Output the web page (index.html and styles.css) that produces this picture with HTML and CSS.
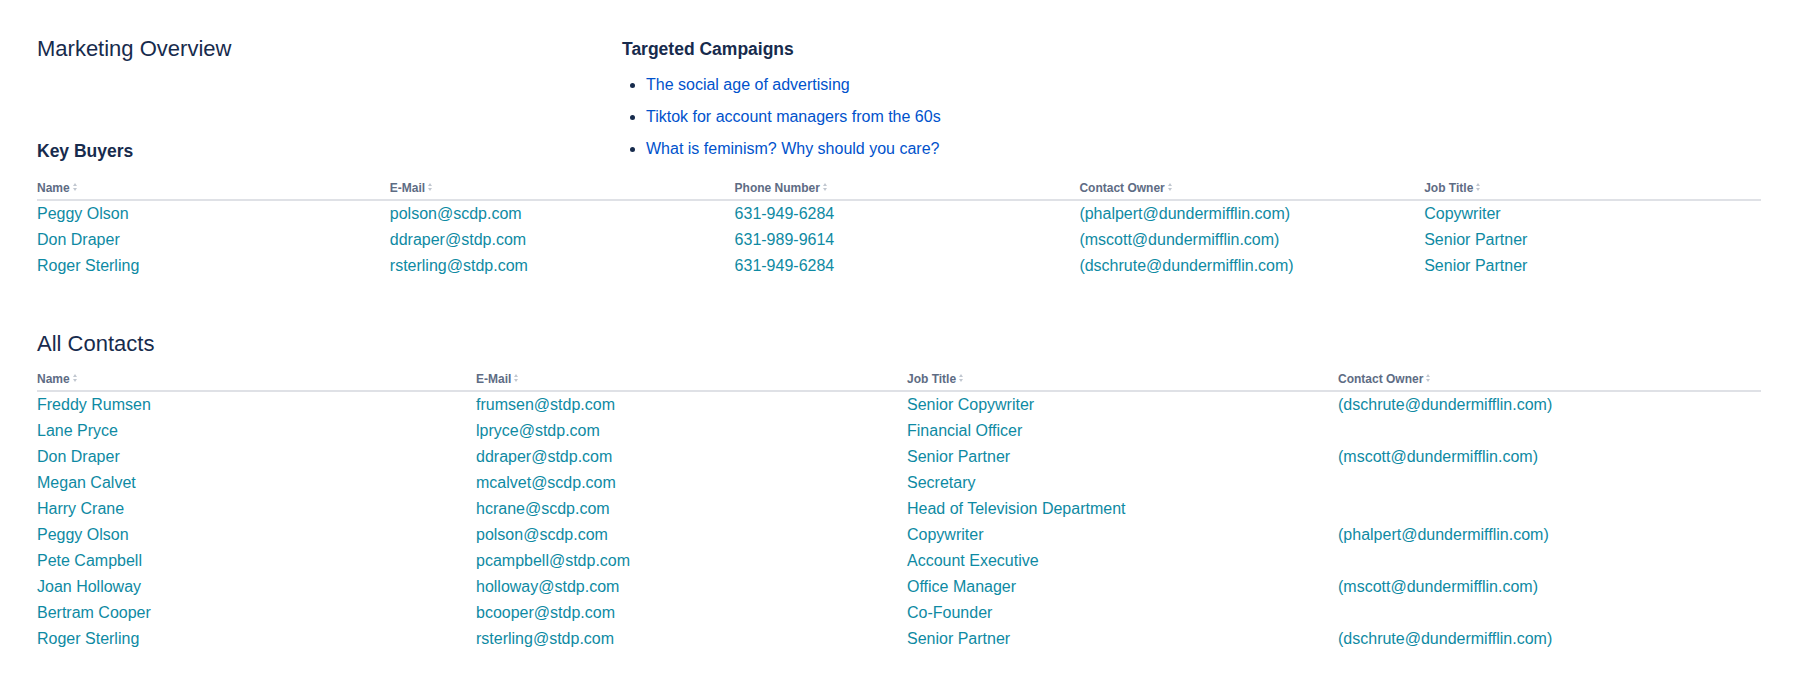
FILE: index.html
```html
<!DOCTYPE html>
<html lang="en">
<head>
<meta charset="utf-8">
<title>Marketing Overview</title>
<link rel="stylesheet" href="styles.css">
</head>
<body>
<main class="page">
  <section class="top">
    <div class="left-col">
      <h1 class="h1">Marketing Overview</h1>
      <h3 class="h3">Key Buyers</h3>
    </div>
    <div class="right-col">
      <h3 class="h3">Targeted Campaigns</h3>
      <ul class="campaigns">
        <li><a href="#">The social age of advertising</a></li>
        <li><a href="#">Tiktok for account managers from the 60s</a></li>
        <li><a href="#">What is feminism? Why should you care?</a></li>
      </ul>
    </div>
  </section>

  <table class="grid key-buyers">
    <thead>
      <tr>
        <th><span class="sort">Name</span></th>
        <th><span class="sort">E-Mail</span></th>
        <th><span class="sort">Phone Number</span></th>
        <th><span class="sort">Contact Owner</span></th>
        <th><span class="sort">Job Title</span></th>
      </tr>
    </thead>
    <tbody>
      <tr><td>Peggy Olson</td><td>polson@scdp.com</td><td>631-949-6284</td><td>(phalpert@dundermifflin.com)</td><td>Copywriter</td></tr>
      <tr><td>Don Draper</td><td>ddraper@stdp.com</td><td>631-989-9614</td><td>(mscott@dundermifflin.com)</td><td>Senior Partner</td></tr>
      <tr><td>Roger Sterling</td><td>rsterling@stdp.com</td><td>631-949-6284</td><td>(dschrute@dundermifflin.com)</td><td>Senior Partner</td></tr>
    </tbody>
  </table>

  <h1 class="h1 all-title">All Contacts</h1>

  <table class="grid all-contacts">
    <thead>
      <tr>
        <th><span class="sort">Name</span></th>
        <th><span class="sort">E-Mail</span></th>
        <th><span class="sort">Job Title</span></th>
        <th><span class="sort">Contact Owner</span></th>
      </tr>
    </thead>
    <tbody>
      <tr><td>Freddy Rumsen</td><td>frumsen@stdp.com</td><td>Senior Copywriter</td><td>(dschrute@dundermifflin.com)</td></tr>
      <tr><td>Lane Pryce</td><td>lpryce@stdp.com</td><td>Financial Officer</td><td></td></tr>
      <tr><td>Don Draper</td><td>ddraper@stdp.com</td><td>Senior Partner</td><td>(mscott@dundermifflin.com)</td></tr>
      <tr><td>Megan Calvet</td><td>mcalvet@scdp.com</td><td>Secretary</td><td></td></tr>
      <tr><td>Harry Crane</td><td>hcrane@scdp.com</td><td>Head of Television Department</td><td></td></tr>
      <tr><td>Peggy Olson</td><td>polson@scdp.com</td><td>Copywriter</td><td>(phalpert@dundermifflin.com)</td></tr>
      <tr><td>Pete Campbell</td><td>pcampbell@stdp.com</td><td>Account Executive</td><td></td></tr>
      <tr><td>Joan Holloway</td><td>holloway@stdp.com</td><td>Office Manager</td><td>(mscott@dundermifflin.com)</td></tr>
      <tr><td>Bertram Cooper</td><td>bcooper@stdp.com</td><td>Co-Founder</td><td></td></tr>
      <tr><td>Roger Sterling</td><td>rsterling@stdp.com</td><td>Senior Partner</td><td>(dschrute@dundermifflin.com)</td></tr>
    </tbody>
  </table>
</main>
</body>
</html>
```

FILE: styles.css
```css
html, body {
  margin: 0;
  padding: 0;
  background: #ffffff;
}

body {
  font-family: "Liberation Sans", Arial, sans-serif;
  color: #172b4d;
}

.page {
  padding: 35px 39px 0 37px;
}

.top {
  display: grid;
  grid-template-columns: 585px 1fr;
}

.left-col {
  display: flex;
  flex-direction: column;
  justify-content: space-between;
}

.h1 {
  margin: 0;
  font-size: 22px;
  line-height: 28px;
  font-weight: 400;
  color: #172b4d;
}

.h3 {
  margin: 0;
  font-size: 17.5px;
  line-height: 24px;
  font-weight: 700;
  color: #172b4d;
}

.right-col {
  padding-top: 2px;
  padding-bottom: 2px;
}

.campaigns {
  list-style: disc;
  margin: 12px 0 0;
  padding-left: 24px;
  color: #172b4d;
}

.campaigns li {
  font-size: 16px;
  line-height: 24px;
  margin-bottom: 8px;
}

.campaigns li:last-child {
  margin-bottom: 0;
}

.campaigns a {
  color: #0052cc;
  text-decoration: none;
}

.grid {
  width: 100%;
  border-collapse: collapse;
  table-layout: fixed;
}

.key-buyers {
  margin-top: 13px;
}

.grid th {
  text-align: left;
  font-size: 12px;
  line-height: 16px;
  font-weight: 700;
  color: #5e6c84;
  padding: 4px 0 3px 8px;
  border-bottom: 2px solid #dfe1e6;
}

.grid td {
  font-size: 16px;
  line-height: 20px;
  color: #0e8aa3;
  padding: 3px 0 3px 8px;
  white-space: nowrap;
}

.grid th:first-child,
.grid td:first-child {
  padding-left: 0;
}

.sort {
  position: relative;
  padding-right: 8px;
}

.sort::before,
.sort::after {
  content: "";
  position: absolute;
  right: 1px;
  width: 0;
  height: 0;
  border-left: 2.5px solid transparent;
  border-right: 2.5px solid transparent;
}

.sort::before {
  top: 2px;
  border-bottom: 3px solid #c1c7d0;
}

.sort::after {
  top: 7px;
  border-top: 3px solid #c1c7d0;
}

.all-title {
  margin-top: 51px;
}

.all-contacts {
  margin-top: 9px;
}
```
